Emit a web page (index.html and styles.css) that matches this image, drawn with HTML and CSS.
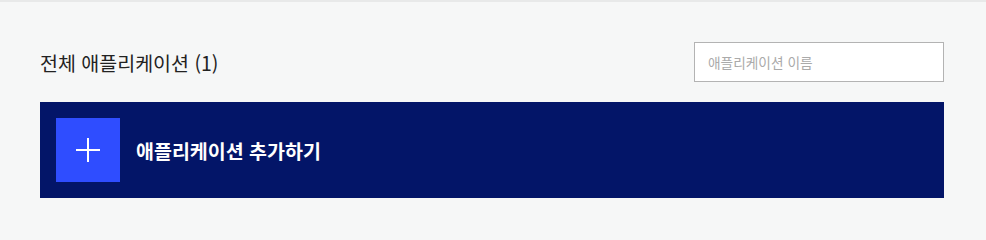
FILE: index.html
```html
<!DOCTYPE html>
<html lang="ko">
<head>
<meta charset="utf-8">
<link rel="stylesheet" href="styles.css">
</head>
<body>
<div class="page">
  <div class="header">
    <h2 class="title">전체 애플리케이션 (1)</h2>
    <input class="search" type="text" placeholder="애플리케이션 이름">
  </div>
  <div class="add-card">
    <div class="add-icon">
      <svg width="24" height="24" viewBox="0 0 24 24"><path d="M12 0V24M0 12H24" stroke="#fff" stroke-width="2" fill="none"/></svg>
    </div>
    <span class="add-label">애플리케이션 추가하기</span>
  </div>
</div>
</body>
</html>
```
FILE: styles.css
```css
html, body {
  margin: 0;
  padding: 0;
  background: #f6f7f7;
  font-family: "Noto Sans CJK KR", "Noto Sans", sans-serif;
}
.page {
  border-top: 2px solid #e8e9e9;
  padding: 40px 42px 0 40px;
}
.header {
  display: flex;
  align-items: center;
  justify-content: space-between;
  height: 40px;
}
.title {
  margin: 0;
  font-size: 19.5px;
  font-weight: 400;
  color: #222;
}
.search {
  box-sizing: border-box;
  width: 250px;
  height: 40px;
  border: 1px solid #b3b3b3;
  background: #fff;
  padding: 0 13px;
  font-family: inherit;
  font-size: 13.7px;
  outline: none;
}
.search::placeholder {
  color: #aaa;
}
.add-card {
  margin-top: 20px;
  background: #031568;
  padding: 16px;
  display: flex;
  align-items: center;
  gap: 16px;
}
.add-icon {
  width: 64px;
  height: 64px;
  background: #2f4dff;
  display: flex;
  align-items: center;
  justify-content: center;
}
.add-label {
  color: #fff;
  font-size: 19.5px;
  font-weight: 700;
}
```
